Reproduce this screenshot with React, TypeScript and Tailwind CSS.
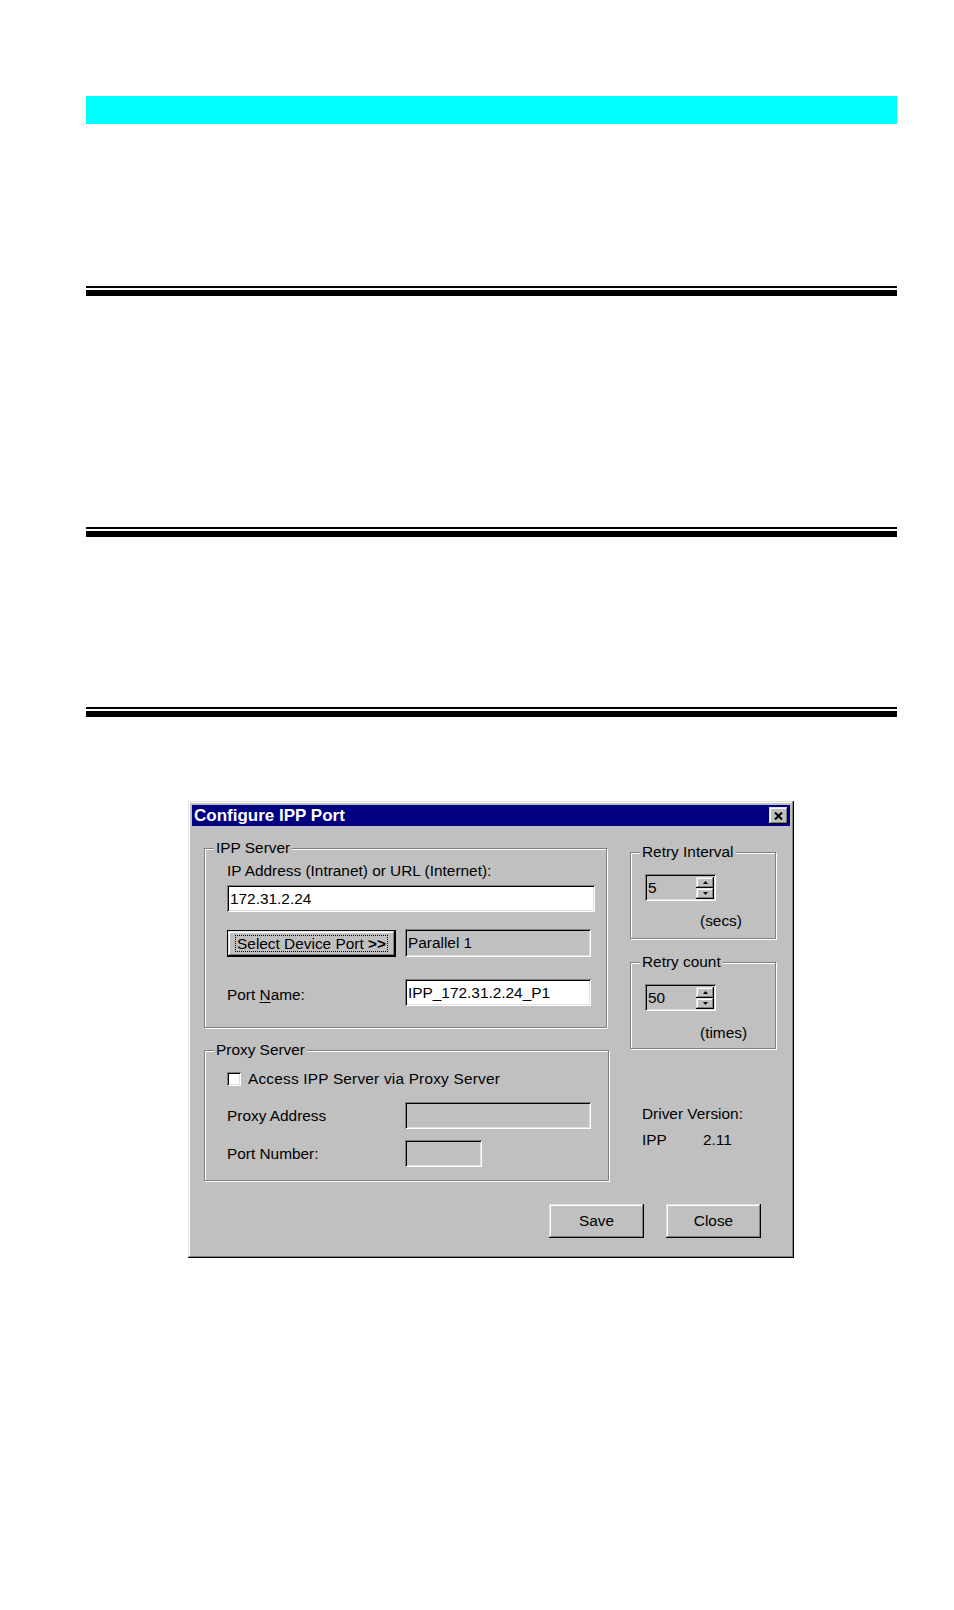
import React from 'react';

// win9x bevels
const raised =
  'shadow-[inset_-1px_-1px_#000,inset_1px_1px_#dfdfdf,inset_-2px_-2px_#808080,inset_2px_2px_#fff]';
const sunken =
  'shadow-[inset_1px_1px_#808080,inset_-1px_-1px_#fff,inset_2px_2px_#000,inset_-2px_-2px_#dfdfdf]';
const etched = 'border border-[#808080] shadow-[1px_1px_#fff,inset_1px_1px_#fff]';

function Rule() {
  return (
    <div className="flex flex-col gap-[2px]">
      <div className="h-[2px] bg-black" />
      <div className="h-[6px] bg-black" />
    </div>
  );
}

function GroupBox({
  title,
  className,
  children,
}: {
  title: string;
  className: string;
  children: React.ReactNode;
}) {
  return (
    <div className={`relative ${etched} ${className}`}>
      <span className="absolute -top-[9px] left-[9px] bg-[#c0c0c0] px-[2px] leading-[16px]">
        {title}
      </span>
      {children}
    </div>
  );
}

function Field({
  value,
  white,
  className,
}: {
  value?: string;
  white?: boolean;
  className: string;
}) {
  return (
    <div
      className={`flex items-center pl-[3px] leading-[16px] ${
        white ? 'bg-white' : 'bg-[#c0c0c0]'
      } ${sunken} ${className}`}
    >
      {value}
    </div>
  );
}

function Arrow({ up }: { up?: boolean }) {
  return (
    <div className={`flex h-[11px] w-[18px] items-center justify-center bg-[#c0c0c0] ${raised}`}>
      <svg width="5" height="3" viewBox="0 0 5 3">
        <path d={up ? 'M2.5 0 L5 3 L0 3 Z' : 'M0 0 L5 0 L2.5 3 Z'} fill="#000" />
      </svg>
    </div>
  );
}

function Spin({ value }: { value: string }) {
  return (
    <div className={`flex h-[27px] w-[71px] items-center bg-[#c0c0c0] pl-[3px] pr-[2px] ${sunken}`}>
      <span className="flex-1 leading-[16px]">{value}</span>
      <div className="flex flex-col">
        <Arrow up />
        <Arrow />
      </div>
    </div>
  );
}

function Button({ label }: { label: string }) {
  return (
    <div
      className={`flex h-[34px] w-[95px] items-center justify-center bg-[#c0c0c0] leading-[16px] ${raised}`}
    >
      {label}
    </div>
  );
}

function Dialog() {
  return (
    <div className={`h-[457px] bg-[#c0c0c0] p-[4px] ${raised}`}>
      <div className="flex h-[21px] items-center justify-between bg-[#000080] pl-[2px] pr-[2px]">
        <span className="text-[17px] font-bold leading-none text-white">Configure IPP Port</span>
        <div className={`flex h-[17px] w-[19px] items-center justify-center bg-[#c0c0c0] ${raised}`}>
          <svg width="9" height="8" viewBox="0 0 9 8">
            <path d="M1 0.5 L8 7.5 M8 0.5 L1 7.5" stroke="#000" strokeWidth="2" />
          </svg>
        </div>
      </div>

      <div className="flex gap-[21px] pl-[12px] pt-[22px]">
        {/* left column */}
        <div className="flex w-[405px] flex-col gap-[22px]">
          <GroupBox title="IPP Server" className="h-[180px] w-[403px] pl-[22px] pr-[12px] pt-[14px]">
            <div className="leading-[16px]">IP Address (Intranet) or URL (Internet):</div>
            <Field white value="172.31.2.24" className="mt-[6px] h-[27px] w-[368px]" />
            <div className="mt-[17px] flex items-center gap-[9px]">
              <div className="flex h-[27px] w-[169px] items-center justify-center border border-black bg-[#c0c0c0]">
                <div className={`flex h-full w-full items-center justify-center ${raised}`}>
                  <span className="border border-dotted border-black px-[1px] leading-[15px]">
                    Select Device Port <span className="font-bold">&gt;&gt;</span>
                  </span>
                </div>
              </div>
              <Field value="Parallel 1" className="h-[28px] w-[186px]" />
            </div>
            <div className="mt-[22px] flex items-center">
              <span className="w-[178px] pt-[5px] leading-[16px]">
                Port <span className="underline underline-offset-2">N</span>ame:
              </span>
              <Field white value="IPP_172.31.2.24_P1" className="h-[27px] w-[186px]" />
            </div>
          </GroupBox>

          <GroupBox title="Proxy Server" className="h-[131px] w-[405px] pl-[22px] pt-[20px]">
            <div className="flex items-center gap-[7px] leading-[16px]">
              <div className={`h-[14px] w-[14px] bg-white ${sunken}`} />
              <span className="tracking-[0.2px]">Access IPP Server via Proxy Server</span>
            </div>
            <div className="mt-[15px] flex items-center">
              <span className="w-[178px] leading-[16px]">Proxy Address</span>
              <Field className="h-[27px] w-[186px]" />
            </div>
            <div className="mt-[11px] flex items-center">
              <span className="w-[178px] leading-[16px]">Port Number:</span>
              <Field className="h-[27px] w-[77px]" />
            </div>
          </GroupBox>
        </div>

        {/* right column */}
        <div className="mt-[4px] flex w-[146px] flex-col">
          <GroupBox title="Retry Interval" className="h-[87px] w-[146px] pl-[14px] pt-[21px]">
            <Spin value="5" />
            <div className="mt-[12px] pl-[55px] leading-[16px]">(secs)</div>
          </GroupBox>
          <GroupBox title="Retry count" className="mt-[23px] h-[87px] w-[146px] pl-[14px] pt-[21px]">
            <Spin value="50" />
            <div className="mt-[14px] pl-[55px] leading-[16px]">(times)</div>
          </GroupBox>
          <div className="mt-[57px] pl-[12px] leading-[16px]">Driver Version:</div>
          <div className="mt-[10px] flex pl-[12px] leading-[16px]">
            <span className="w-[61px]">IPP</span>
            <span>2.11</span>
          </div>
        </div>
      </div>

      <div className="mt-[23px] flex justify-end gap-[22px] pr-[29px]">
        <Button label="Save" />
        <Button label="Close" />
      </div>
    </div>
  );
}

export default function App() {
  return (
    <div className="min-h-[1610px] bg-white font-['Liberation_Sans',Arial,sans-serif] text-[15.4px] text-black">
      <div className="ml-[86px] w-[811px] pt-[96px]">
        <div className="h-[28px] bg-[#00ffff]" />
        <div className="mt-[162px]">
          <Rule />
        </div>
        <div className="mt-[231px]">
          <Rule />
        </div>
        <div className="mt-[170px]">
          <Rule />
        </div>
        <div className="ml-[102px] mt-[84px] w-[606px]">
          <Dialog />
        </div>
      </div>
    </div>
  );
}
